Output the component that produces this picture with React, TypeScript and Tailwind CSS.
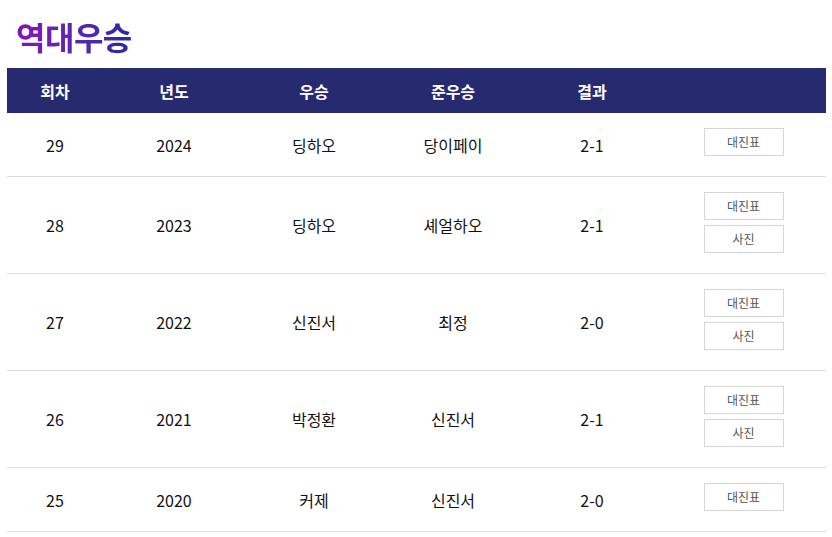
const rows = [
  { no: 29, year: 2024, winner: "딩하오", runner: "당이페이", score: "2-1", photo: false },
  { no: 28, year: 2023, winner: "딩하오", runner: "셰얼하오", score: "2-1", photo: true },
  { no: 27, year: 2022, winner: "신진서", runner: "최정", score: "2-0", photo: true },
  { no: 26, year: 2021, winner: "박정환", runner: "신진서", score: "2-1", photo: true },
  { no: 25, year: 2020, winner: "커제", runner: "신진서", score: "2-0", photo: false },
];

const font = { fontFamily: '"Noto Sans CJK KR", "Noto Sans", sans-serif' };

export default function App() {
  return (
    <div className="w-[832px] h-[537px] bg-white overflow-hidden" style={font}>
      <h2 className="pl-[16px] pt-[14px] h-[68px] text-[32px] font-bold leading-[44px] tracking-[-0.5px]">
        <span className="bg-gradient-to-r from-[#8a0cb9] to-[#2429a6] bg-clip-text text-transparent">역대우승</span>
      </h2>
      <table className="ml-[7px] w-[819px] border-collapse table-fixed text-[16px] text-[#111]">
        <colgroup>
          <col className="w-[96px]" />
          <col className="w-[142px]" />
          <col className="w-[138px]" />
          <col className="w-[140px]" />
          <col className="w-[138px]" />
          <col />
        </colgroup>
        <thead>
          <tr className="bg-[#282a70] text-white h-[45px]">
            <th className="font-bold">회차</th>
            <th className="font-bold">년도</th>
            <th className="font-bold">우승</th>
            <th className="font-bold">준우승</th>
            <th className="font-bold">결과</th>
            <th></th>
          </tr>
        </thead>
        <tbody>
          {rows.map(r => (
            <tr key={r.no} className="border-b border-[#dcdcdc] text-center">
              <td>{r.no}</td>
              <td>{r.year}</td>
              <td>{r.winner}</td>
              <td>{r.runner}</td>
              <td>{r.score}</td>
              <td className="pt-[15px] pb-[20px]">
                <div className="flex flex-col items-center gap-[5px]">
                  <button className="w-[80px] h-[28px] border border-[#d6d6d6] text-[12px] text-[#555] bg-white">대진표</button>
                  {r.photo && (
                    <button className="w-[80px] h-[28px] border border-[#d6d6d6] text-[12px] text-[#555] bg-white">사진</button>
                  )}
                </div>
              </td>
            </tr>
          ))}
        </tbody>
      </table>
    </div>
  );
}
